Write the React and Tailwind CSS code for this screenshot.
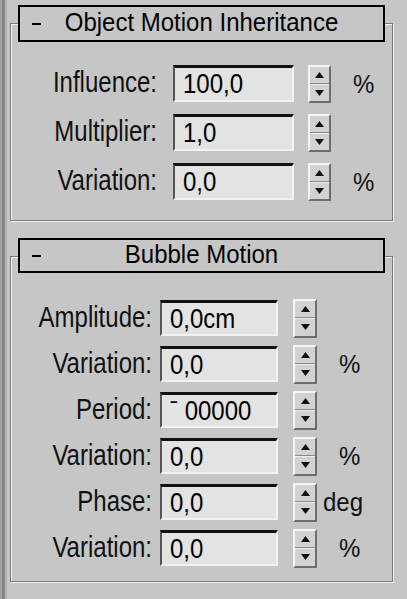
import React from "react";

const font = "font-['Liberation_Sans',Arial,sans-serif]";

const Spinner = ({ h }) => (
  <div
    className={`flex flex-col border-t-2 border-l-2 border-t-[#f6f6f6] border-l-[#f6f6f6] border-b-2 border-r-2 border-b-[#6e6e6e] border-r-[#6e6e6e] bg-[#d2d2d2] ${h}`}
  >
    <div className="flex flex-1 items-center justify-center border-b border-b-[#8a8a8a]">
      <svg width="9" height="6" viewBox="0 0 9 6">
        <polygon points="4.5,0 9,6 0,6" fill="#111" />
      </svg>
    </div>
    <div className="flex flex-1 items-center justify-center border-t border-t-[#f0f0f0]">
      <svg width="9" height="6" viewBox="0 0 9 6">
        <polygon points="0,0 9,0 4.5,6" fill="#111" />
      </svg>
    </div>
  </div>
);

const Field = ({ value, w, h }) => (
  <div
    className={`flex items-center pl-[8px] border-t-[3px] border-t-[#111] border-l-2 border-l-[#555] border-r-2 border-r-[#f2f2f2] border-b-2 border-b-[#f2f2f2] bg-[#e3e3e3] ${w} ${h}`}
  >
    <span className="inline-block text-[24px] leading-none text-black scale-y-[1.15]">{value}</span>
  </div>
);

const TitleBar = ({ title, h }) => (
  <div
    className={`relative z-10 ml-[13px] grid w-[367px] grid-cols-[32px_1fr_32px] items-center border-2 border-black bg-[#c6c6c6] ${h}`}
  >
    <div className="ml-[12px] h-[2px] w-[9px] bg-black" />
    <div className="text-center">
      <span className="inline-block text-[24px] leading-none text-black scale-y-110">{title}</span>
    </div>
    <div />
  </div>
);

const Label = ({ text, w }) => (
  <div className={`text-right ${w}`}>
    <span className="inline-block text-[24px] leading-none text-[#111] scale-y-125">{text}</span>
  </div>
);

const Unit = ({ text, ml }) => (
  <span className={`inline-block text-[24px] leading-none text-[#111] scale-y-110 ${ml}`}>{text}</span>
);

const motionRows = [
  { label: "Influence:", value: "100,0", unit: "%" },
  { label: "Multiplier:", value: "1,0", unit: "" },
  { label: "Variation:", value: "0,0", unit: "%" },
];

const bubbleRows = [
  { label: "Amplitude:", value: "0,0cm", unit: "" },
  { label: "Variation:", value: "0,0", unit: "%" },
  { label: "Period:", value: "ˉ 00000", unit: "" },
  { label: "Variation:", value: "0,0", unit: "%" },
  { label: "Phase:", value: "0,0", unit: "deg" },
  { label: "Variation:", value: "0,0", unit: "%" },
];

const frame =
  "ml-[5px] w-[383px] border border-[#7a7a7a] shadow-[inset_1px_1px_0_#f2f2f2,1px_1px_0_#f2f2f2]";

export default function App() {
  return (
    <div className={`flex h-[599px] w-[407px] overflow-hidden bg-[#c6c6c6] ${font}`}>
      {/* left edge of the command panel */}
      <div className="flex w-[7px] shrink-0">
        <div className="w-[2px] bg-[#a2a2a2]" />
        <div className="w-[3px] bg-[#858585]" />
        <div className="w-[2px] bg-[#b4b4b4]" />
      </div>

      <div className="flex flex-1 flex-col pt-[5px] -ml-[2px]">
        {/* Object Motion Inheritance */}
        <TitleBar title="Object Motion Inheritance" h="h-[37px]" />
        <div className={`${frame} -mt-[19px] h-[198px] pt-[41px]`}>
          <div className="flex flex-col gap-[12px]">
            {motionRows.map((r, i) => (
              <div key={i} className="flex h-[37px] items-center">
                <Label text={r.label} w="w-[146px]" />
                <div className="ml-[16px]">
                  <Field value={r.value} w="w-[121px]" h="h-[37px]" />
                </div>
                <div className="ml-[14px]">
                  <Spinner h="h-[38px] w-[23px]" />
                </div>
                {r.unit && <Unit text={r.unit} ml="ml-[22px]" />}
              </div>
            ))}
          </div>
        </div>

        {/* Bubble Motion */}
        <div className="mt-[17px]">
          <TitleBar title="Bubble Motion" h="h-[35px]" />
        </div>
        <div className={`${frame} -mt-[17px] h-[326px] pt-[43px]`}>
          <div className="flex flex-col gap-[10px]">
            {bubbleRows.map((r, i) => (
              <div key={i} className="flex h-[36px] items-center">
                <Label text={r.label} w="w-[141px]" />
                <div className="ml-[8px]">
                  <Field value={r.value} w="w-[118px]" h="h-[36px]" />
                </div>
                <div className="ml-[15px]">
                  <Spinner h="h-[39px] w-[24px]" />
                </div>
                {r.unit === "deg" && <Unit text="deg" ml="ml-[6px]" />}
                {r.unit === "%" && <Unit text="%" ml="ml-[22px]" />}
              </div>
            ))}
          </div>
        </div>
      </div>
    </div>
  );
}
